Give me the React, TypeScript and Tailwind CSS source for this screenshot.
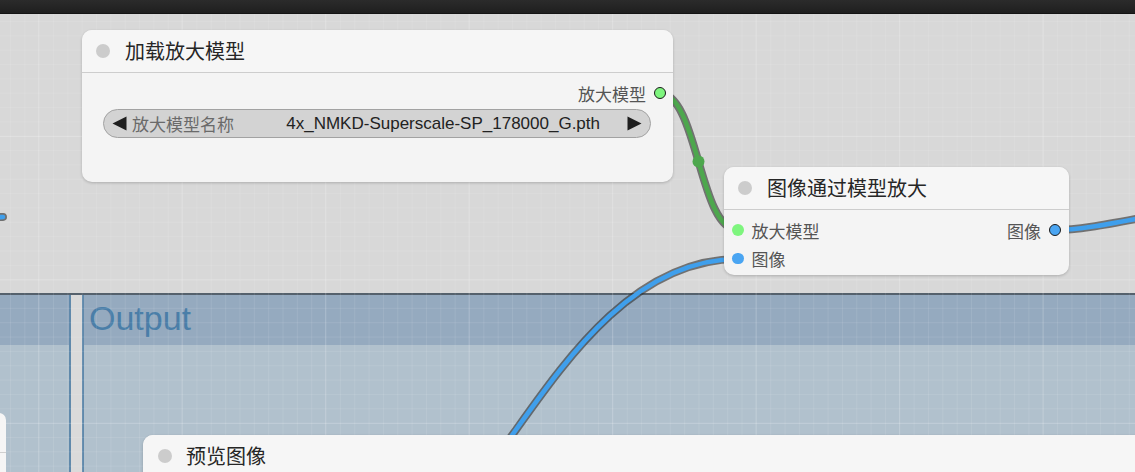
import React from "react";

const CJK = "font-['Noto_Sans_CJK_SC','Noto_Sans',sans-serif]";

function TitleBar({ title, className }: { title: string; className?: string }) {
  return (
    <div className={"flex items-center h-[43px] border-b border-[#cdcdcd] bg-[#f6f6f6] pl-[14px] " + (className ?? "")}>
      <span className="w-[14px] h-[14px] rounded-full bg-[#cccccc] shrink-0" />
      <span className="ml-[15px] text-[20px] leading-none text-[#262626] whitespace-nowrap">{title}</span>
    </div>
  );
}

function Triangle({ dir }: { dir: "left" | "right" }) {
  return (
    <svg width="15" height="15" viewBox="0 0 15 15" className="shrink-0">
      {dir === "left" ? (
        <polygon points="14.5,0.5 0.5,7.5 14.5,14.5" fill="#1e1e1e" />
      ) : (
        <polygon points="0.5,0.5 14.5,7.5 0.5,14.5" fill="#1e1e1e" />
      )}
    </svg>
  );
}

const links = [
  { d: "M 659 93 C 698.5 93, 698.5 230, 738 230", color: "#4da74d" },
  { d: "M 500 452 C 553 380, 625 259, 738 259", color: "#3f9fec" },
  { d: "M 1055 230 C 1100 230, 1160 210, 1260 200", color: "#3f9fec" },
  { d: "M -30 218 L 3 217", color: "#3f9fec" },
];

export default function App() {
  return (
    <div className={"w-[1135px] h-[472px] flex flex-col overflow-hidden " + CJK}>
      <div className="h-[14px] shrink-0 bg-gradient-to-b from-[#2b2b2b] to-[#1f1f1f] border-b border-[#141414]" />
      <div className="relative flex-1 bg-[#d8d8d8] overflow-hidden">
        {/* groups */}
        <div className="absolute left-0 right-0 top-[279px] h-[2px] bg-[#4d5a66]" />
        <div className="absolute left-[-100px] w-[171px] top-[281px] bottom-0 flex flex-col border-r-2 border-[#6089ab] bg-[#b1c1cd]">
          <div className="h-[50px] bg-[#95aabf]" />
        </div>
        <div className="absolute left-[71px] w-[11px] top-[281px] bottom-0 bg-[#dadada]" />
        <div className="absolute left-[82px] right-[-100px] top-[281px] bottom-0 flex flex-col border-l-2 border-[#6089ab] bg-[#b1c1cd]">
          <div className="h-[50px] bg-[#95aabf] pl-[5px] pt-[6px]">
            <span className="font-['Liberation_Sans',Arial,sans-serif] text-[34px] leading-[34px] text-[#4a7ea8]">Output</span>
          </div>
        </div>

        {/* grid */}
        <div className="absolute inset-0 pointer-events-none bg-[linear-gradient(to_right,rgba(255,255,255,0.09)_1px,transparent_1px),linear-gradient(to_bottom,rgba(255,255,255,0.09)_1px,transparent_1px)] bg-[size:14.35px_14.35px] bg-[position:10px_7px]" />
        <div className="absolute inset-0 pointer-events-none bg-[linear-gradient(to_right,rgba(255,255,255,0.14)_1px,transparent_1px),linear-gradient(to_bottom,rgba(255,255,255,0.14)_1px,transparent_1px)] bg-[size:143.5px_143.5px] bg-[position:38px_122px]" />

        {/* links */}
        <svg className="absolute left-0 top-0 overflow-visible" width="1135" height="458" viewBox="0 14 1135 458">
          <g fill="none" strokeLinecap="round">
            {links.map((l, i) => (
              <g key={i}>
                <path d={l.d} stroke="rgba(45,45,45,0.6)" strokeWidth={8} />
                <path d={l.d} stroke={l.color} strokeWidth={4.6} />
              </g>
            ))}
          </g>
          <circle cx="698.5" cy="161.5" r="6" fill="#4da74d" />
        </svg>

        {/* node: 加载放大模型 */}
        <div className="absolute left-[82px] top-[16px] w-[591px] h-[152px] rounded-[10px] overflow-hidden bg-[#f4f4f4] shadow-[0_1px_3px_rgba(0,0,0,0.2)] flex flex-col">
          <TitleBar title="加载放大模型" />
          <div className="flex flex-col pt-[10px]">
            <div className="h-[20px] flex items-center justify-end pr-[7px]">
              <span className="text-[17px] leading-none text-[#555]">放大模型</span>
              <span className="ml-[8px] w-[12px] h-[12px] rounded-full bg-[#7ef57e] border border-[#1a1a1a]" />
            </div>
            <div className="mt-[6px] mx-[21px] mr-[22px] h-[29px] rounded-full border border-[#a2a2a2] bg-[#d3d3d3] flex items-center pl-[8px] pr-[8px]">
              <Triangle dir="left" />
              <span className="ml-[5px] text-[17px] leading-none text-[#6a6a6a] whitespace-nowrap">放大模型名称</span>
              <span className="flex-1" />
              <span className="font-['Liberation_Sans',Arial,sans-serif] text-[17px] leading-none text-[#222] whitespace-nowrap">4x_NMKD-Superscale-SP_178000_G.pth</span>
              <span className="w-[27px]" />
              <Triangle dir="right" />
            </div>
          </div>
        </div>

        {/* node: 图像通过模型放大 */}
        <div className="absolute left-[724px] top-[153px] w-[345px] h-[108px] rounded-[10px] overflow-hidden bg-[#f4f4f4] shadow-[0_1px_3px_rgba(0,0,0,0.2)] flex flex-col">
          <TitleBar title="图像通过模型放大" />
          <div className="flex flex-col pt-[10px] gap-[8.5px]">
            <div className="h-[20px] flex items-center pl-[8px] pr-[8px]">
              <span className="w-[11.6px] h-[11.6px] rounded-full bg-[#7ef57e]" />
              <span className="ml-[8px] text-[17px] leading-none text-[#555]">放大模型</span>
              <span className="flex-1" />
              <span className="text-[17px] leading-none text-[#555]">图像</span>
              <span className="ml-[8px] w-[12px] h-[12px] rounded-full bg-[#4aa5f2] border border-[#1a1a1a]" />
            </div>
            <div className="h-[20px] flex items-center pl-[8px]">
              <span className="w-[11.6px] h-[11.6px] rounded-full bg-[#4aa5f2]" />
              <span className="ml-[8px] text-[17px] leading-none text-[#555]">图像</span>
            </div>
          </div>
        </div>

        {/* node: 预览图像 */}
        <div className="absolute left-[143px] top-[421px] w-[1100px] h-[120px] rounded-[10px] overflow-hidden bg-[#f4f4f4] shadow-[0_1px_3px_rgba(0,0,0,0.2)] flex flex-col">
          <div className="flex items-center h-[42px] bg-[#f6f6f6] pl-[15px]">
            <span className="w-[14px] h-[14px] rounded-full bg-[#cccccc] shrink-0" />
            <span className="ml-[14px] text-[20px] leading-none text-[#262626]">预览图像</span>
          </div>
        </div>

        {/* partial node at left edge */}
        <div className="absolute left-[-100px] top-[399px] w-[106px] h-[120px] rounded-[7px] overflow-hidden bg-[#f5f5f5] flex flex-col">
          <div className="h-[40px] border-b border-[#cfcfcf]" />
        </div>
      </div>
    </div>
  );
}
